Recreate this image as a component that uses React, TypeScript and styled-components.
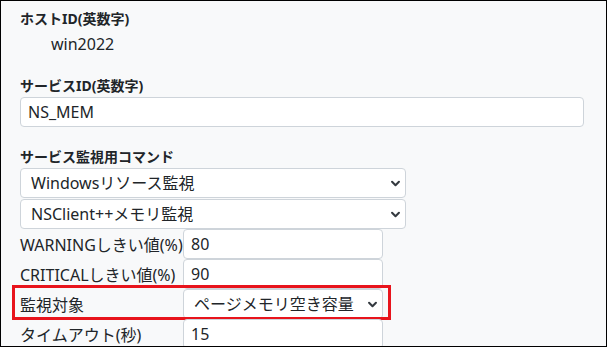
import React from 'react';
import styled, { createGlobalStyle } from 'styled-components';

const GlobalStyle = createGlobalStyle`
    html, body {
        margin: 0;
        padding: 0;
        background: #ffffff;
    }
    body {
        font-family: "Noto Sans", "Noto Sans CJK JP", sans-serif;
        color: #212529;
    }
`;

const commands = ['Windowsリソース監視'];
const checks = ['NSClient++メモリ監視'];
const targets = ['ページメモリ空き容量'];

const Chevron = (): JSX.Element => (
    <SChevron viewBox="0 0 16 16" aria-hidden="true">
        <path d="m3 5.5 5 5 5-5" fill="none" stroke="#343a40" strokeWidth="3" strokeLinecap="round" strokeLinejoin="round" />
    </SChevron>
);

interface ISelectProps {
    options: string[];
    width: number;
}

const Select = ({ options, width }: ISelectProps): JSX.Element => (
    <SSelectWrap $width={width}>
        <SSelect defaultValue={options[0]}>
            {options.map((o) => <option key={o}>{o}</option>)}
        </SSelect>
        <Chevron />
    </SSelectWrap>
);

const App = (): JSX.Element => {
    return (
        <>
            <GlobalStyle />
            <SFrame>
                <SGroup>
                    <SLabel>ホストID(英数字)</SLabel>
                    <SPlain>win2022</SPlain>
                </SGroup>
                <SGroup>
                    <SLabel>サービスID(英数字)</SLabel>
                    <SInput $width={564} defaultValue="NS_MEM" />
                </SGroup>
                <SGroup>
                    <SLabel>サービス監視用コマンド</SLabel>
                    <SStack>
                        <Select options={commands} width={386} />
                        <Select options={checks} width={386} />
                    </SStack>
                    <SRow>
                        <SRowLabel>WARNINGしきい値(%)</SRowLabel>
                        <SInput $width={200} defaultValue="80" />
                    </SRow>
                    <SRow>
                        <SRowLabel>CRITICALしきい値(%)</SRowLabel>
                        <SInput $width={200} defaultValue="90" />
                    </SRow>
                    <SRow>
                        <SRowLabel>監視対象</SRowLabel>
                        <Select options={targets} width={200} />
                        <SHighlight />
                    </SRow>
                    <SRow>
                        <SRowLabel>タイムアウト(秒)</SRowLabel>
                        <SInput $width={200} defaultValue="15" />
                    </SRow>
                </SGroup>
            </SFrame>
        </>
    );
};

const SFrame = styled.div`
    box-sizing: border-box;
    width: 607px;
    height: 347px;
    overflow: hidden;
    border: 1px solid #000000;
    background: #f8f9fa;
    padding: 8px 0 0 19px;
`;

const SGroup = styled.div`
    display: flex;
    flex-direction: column;
    align-items: flex-start;
    margin-bottom: 20px;
`;

const SLabel = styled.label`
    display: block;
    font-size: 14px;
    font-weight: bold;
    line-height: 20px;
    margin-bottom: 1px;
`;

const SPlain = styled.div`
    font-size: 16px;
    line-height: 24px;
    padding: 2px 0 0 31px;
`;

const SInput = styled.input<{ $width: number }>`
    box-sizing: border-box;
    width: ${(p) => p.$width}px;
    height: 30px;
    padding: 0 7px;
    font-family: inherit;
    font-size: 16px;
    color: #212529;
    background: #ffffff;
    border: 1px solid #ced4da;
    border-radius: 4px;
    outline: none;
`;

const SStack = styled.div`
    display: flex;
    flex-direction: column;
    gap: 1px;
`;

const SSelectWrap = styled.div<{ $width: number }>`
    position: relative;
    width: ${(p) => p.$width}px;
    height: 30px;
`;

const SSelect = styled.select`
    box-sizing: border-box;
    width: 100%;
    height: 100%;
    appearance: none;
    padding: 0 28px 0 10px;
    font-family: inherit;
    font-size: 16px;
    color: #212529;
    background: #ffffff;
    border: 1px solid #ced4da;
    border-radius: 4px;
    outline: none;
`;

const SChevron = styled.svg`
    position: absolute;
    right: 5px;
    top: 10px;
    width: 11px;
    height: 11px;
    pointer-events: none;
`;

const SRow = styled.div`
    position: relative;
    display: flex;
    align-items: center;
    height: 30px;
`;

const SRowLabel = styled.span`
    width: 163px;
    font-size: 16px;
    white-space: nowrap;
`;

const SHighlight = styled.div`
    position: absolute;
    left: -8px;
    right: -8px;
    top: -4px;
    bottom: -1px;
    border: 3px solid #e8141c;
    pointer-events: none;
`;

export default App;
